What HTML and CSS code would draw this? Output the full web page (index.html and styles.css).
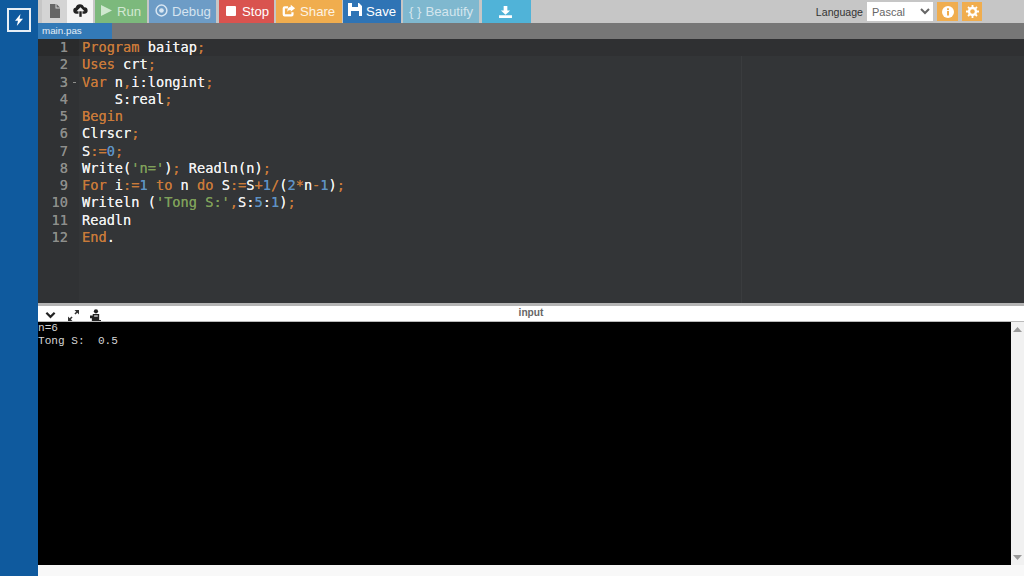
FILE: index.html
```html
<!DOCTYPE html>
<html lang="en">
<head>
<meta charset="utf-8">
<title>Online Pascal Compiler</title>
<link rel="stylesheet" href="styles.css">
</head>
<body>
<aside class="sidebar">
  <div class="logo">
    <svg width="10" height="12" viewBox="0 0 10 12"><path d="M6.500 0 1 6.800h3L2.800 12 9 4.800H5.600z" fill="#fff"/></svg>
  </div>
</aside>
<main class="app">
  <header class="toolbar">
    <div class="actions">
      <button class="btn icon-btn grey-btn"><svg width="10" height="14" viewBox="0 0 10 14"><path d="M0 0h5.500v4.500H10V14H0zM6.500 0 10 3.500H6.500z" fill="#666"/></svg></button>
      <button class="btn icon-btn white-btn"><svg width="15" height="13" viewBox="0 0 19 16"><path d="M4 12a4 4 0 0 1-.5-7.900A5.500 5.500 0 0 1 14 4a4 4 0 0 1 1 8h-3V9h2.500L9.500 4 4.500 9H7v3z" fill="#222"/><rect x="8" y="9" width="3" height="7" fill="#222"/></svg></button>
      <button class="btn run"><svg width="11" height="11" viewBox="0 0 11 11"><path d="M0 0l11 5.500L0 11z" fill="#cfe8cf"/></svg>Run</button>
      <button class="btn debug"><svg width="13" height="13" viewBox="0 0 14 14"><circle cx="7" cy="7" r="5.800" fill="none" stroke="#d8e6f2" stroke-width="1.600"/><circle cx="7" cy="7" r="2.500" fill="#d8e6f2"/></svg>Debug</button>
      <button class="btn stop"><svg width="10" height="10" viewBox="0 0 10 10"><rect width="10" height="10" rx="1" fill="#fff"/></svg>Stop</button>
      <button class="btn share"><svg width="14" height="13" viewBox="0 0 16 15"><path d="M12 9.500V12a1 1 0 0 1-1 1H3a1 1 0 0 1-1-1V5a1 1 0 0 1 1-1h4" fill="none" stroke="#fff" stroke-width="2.600"/><path d="M10 1l5 4-5 4V6.800C7.500 6.800 6.500 7.600 6 9.500 5.800 6 7.500 3.500 10 3.300z" fill="#fff"/></svg>Share</button>
      <button class="btn save"><svg width="14" height="13" viewBox="0 0 14 13"><path d="M0 0h11l3 3v10H0zM4 0v4h6V0zM3 8v5h8V8z" fill="#fff" fill-rule="evenodd"/></svg>Save</button>
      <button class="btn beautify"><span>{ }</span>Beautify</button>
      <button class="btn download"><svg width="13" height="12" viewBox="0 0 14 13"><path d="M5 0h4v5h3L7 9.500 2 5h3zM0 10h14v3H0z" fill="#fff"/></svg></button>
    </div>
    <div class="lang">
      <label class="lang-label" for="lang">Language</label>
      <select class="lang-select" id="lang"><option>Pascal</option></select>
      <button class="mini-btn"><svg width="12" height="12" viewBox="0 0 12 12"><circle cx="6" cy="6" r="6" fill="#fff"/><rect x="5" y="5" width="2" height="4.500" fill="#f0ad4e"/><rect x="5" y="2.300" width="2" height="1.800" fill="#f0ad4e"/></svg></button>
      <button class="mini-btn gear"><svg width="13" height="13" viewBox="0 0 13 13"><circle cx="6.500" cy="6.500" r="3.500" fill="none" stroke="#fff" stroke-width="2.400"/><path d="M6.500 0v13M0 6.500h13M2 2l9 9M11 2l-9 9" stroke="#fff" stroke-width="1.800" stroke-dasharray="2.400 8.200 2.400"/></svg></button>
    </div>
  </header>
  <nav class="tabs"><span class="tab">main.pas</span></nav>
  <section class="editor">
    <div class="gutter">
      <div class="num active-num">1</div><div class="num">2</div>
      <div class="num fold">3</div><div class="num">4</div>
      <div class="num">5</div><div class="num">6</div>
      <div class="num">7</div><div class="num">8</div>
      <div class="num">9</div><div class="num">10</div>
      <div class="num">11</div><div class="num">12</div>
    </div>
    <div class="code">
      <div class="line"><i class="k">Program</i> baitap<i class="k">;</i></div>
      <div class="line"><i class="k">Uses</i> crt<i class="k">;</i></div>
      <div class="line"><i class="k">Var</i> n<i class="k">,</i>i:longint<i class="k">;</i></div>
      <div class="line">    S:real<i class="k">;</i></div>
      <div class="line"><i class="k">Begin</i></div>
      <div class="line">Clrscr<i class="k">;</i></div>
      <div class="line">S<i class="k">:=</i><i class="n">0</i><i class="k">;</i></div>
      <div class="line">Write(<i class="s">'n='</i>)<i class="k">;</i> Readln(n)<i class="k">;</i></div>
      <div class="line"><i class="k">For</i> i<i class="k">:=</i><i class="n">1</i> <i class="k">to</i> n <i class="k">do</i> S<i class="k">:=</i>S<i class="k">+</i><i class="n">1</i><i class="k">/</i>(<i class="n">2</i><i class="k">*</i>n<i class="k">-</i><i class="n">1</i>)<i class="k">;</i></div>
      <div class="line">Writeln (<i class="s">'Tong S:'</i><i class="k">,</i>S:<i class="n">5</i>:<i class="n">1</i>)<i class="k">;</i></div>
      <div class="line">Readln</div>
      <div class="line"><i class="k">End</i>.</div>
    </div>
  </section>
  <div class="splitter"></div>
  <div class="io-bar">
    <div class="io-tools">
      <svg width="11" height="8" viewBox="0 0 12 8"><path d="M1.500 1.500 6 6l4.500-4.500" fill="none" stroke="#222" stroke-width="2.400"/></svg>
      <svg width="11" height="11" viewBox="0 0 11 11"><path d="M6.500 0H11v4.500L9.300 2.800 7.500 4.600 6.400 3.500 8.200 1.700zM4.500 11H0V6.500l1.700 1.700 1.800-1.800 1.100 1.100-1.800 1.800z" fill="#333"/></svg>
      <svg class="tool-last" width="11" height="12" viewBox="0 0 12 13"><circle cx="6.500" cy="2.500" r="2.300" fill="#222"/><path d="M3 5.500h7V12h2v1H2V10H0V7h3z" fill="#222"/><rect x="4.500" y="7" width="4" height="1.200" fill="#fff"/></svg>
    </div>
    <span class="io-title">input</span>
  </div>
  <section class="console">
    <pre class="terminal">n=6
Tong S:  0.5</pre>
    <div class="scrollbar">
      <svg width="9" height="5" viewBox="0 0 9 5"><path d="M4.500 0 9 5H0z" fill="#999"/></svg>
      <svg width="9" height="5" viewBox="0 0 9 5"><path d="M0 0h9L4.500 5z" fill="#999"/></svg>
    </div>
  </section>
  <div class="footer"></div>
</main>
</body>
</html>
```
FILE: styles.css
```css
* { box-sizing: border-box; }
html, body { margin: 0; height: 100%; }
body {
  display: flex;
  width: 1024px;
  height: 576px;
  overflow: hidden;
  font-family: "Liberation Sans", Arial, sans-serif;
  background: #fff;
}
.sidebar {
  width: 38px;
  flex: none;
  background: #0f5a9e;
  padding: 8px 0 0 7px;
}
.logo {
  width: 24px;
  height: 24px;
  border: 2px solid #e6eef6;
  display: flex;
  align-items: center;
  justify-content: center;
}
.app {
  flex: 1;
  min-width: 0;
  display: flex;
  flex-direction: column;
}
.toolbar {
  height: 23px;
  flex: none;
  background: #c6c6c6;
  display: flex;
  justify-content: space-between;
  padding-left: 4px;
}
.actions { display: flex; gap: 2px; }
.btn {
  height: 23px;
  border: 0;
  margin: 0;
  padding: 0 0 0 6px;
  display: flex;
  align-items: center;
  justify-content: flex-start;
  gap: 4px;
  font: 13.2px "Liberation Sans", Arial, sans-serif;
  color: #fff;
}
.btn svg { margin-bottom: 2px; }
.icon-btn { justify-content: center; padding: 0; }
.grey-btn { width: 25px; background: #d4d4d4; margin-right: -2px; }
.white-btn { width: 26px; background: #f4f4f4; }
.run { width: 52px; background: #7cb97c; color: #d2e8d2; gap: 5px; }
.debug { width: 67px; background: #6d9cc6; color: #d6e4f0; }
.stop { width: 55px; background: #d9534f; gap: 6px; padding-left: 7px; margin-left: 1px; }
.share { width: 66px; background: #f0ad4e; color: #fdf3e3; gap: 4px; }
.save { width: 58px; background: #2f74b5; padding-left: 5px; margin-left: -1px; }
.save svg { margin-bottom: 5px; }
.beautify { width: 76px; background: #7fb8cf; color: #d4e6ee; }
.download { width: 49px; background: #50b3d8; padding-left: 17px; margin-left: 1px; }
.download svg { margin-bottom: 0; }
.lang {
  display: flex;
  align-items: center;
  gap: 4px;
  padding-right: 42px;
}
.lang-label { font-size: 10.600px; color: #333; }
.lang-select {
  width: 66px;
  height: 19px;
  border: 0;
  background: #fff;
  font: 11px "Liberation Sans", Arial, sans-serif;
  color: #666;
  padding: 0 0 0 1px;
}
.mini-btn {
  width: 21px;
  height: 19px;
  border: 0;
  padding: 0;
  background: #f0ad4e;
  display: flex;
  align-items: center;
  justify-content: center;
}
.gear { width: 20px; }
.tabs {
  height: 16px;
  flex: none;
  background: #777;
  display: flex;
}
.tab {
  width: 74px;
  background: #337ab7;
  color: #e4eef6;
  font-size: 9.800px;
  line-height: 16px;
  padding-left: 4px;
}
.editor {
  height: 264px;
  flex: none;
  display: flex;
  background: linear-gradient(to right, #333537 703px, #3a3c3e 703px, #3a3c3e 704px, #333537 704px);
  font: 13.650px/17.250px "DejaVu Sans Mono", monospace;
  text-shadow: 0 0 .6px currentColor;
}
.gutter {
  width: 41px;
  flex: none;
  background: #303234;
  color: #8e8f8c;
}
.num {
  height: 17.250px;
  text-align: right;
  padding-right: 11px;
  position: relative;
}
.active-num { background: #2a2b2c; }
.fold::after {
  content: "";
  position: absolute;
  right: 3px;
  top: 8px;
  width: 3px;
  height: 1px;
  background: #8e8f8c;
}
.code { padding-left: 3px; color: #f0f0f0; flex: 1; }
.line { height: 17.250px; white-space: pre; }
.line:first-child { background: #2f3032; margin-left: -3px; padding-left: 3px; }
.k { font-style: normal; color: #c97a3a; }
.n { font-style: normal; color: #5f93c4; }
.s { font-style: normal; color: #7fa05a; }
.splitter { height: 3px; flex: none; background: #b4b4b4; }
.io-bar {
  height: 16px;
  flex: none;
  position: relative;
  background: #fff;
  display: flex;
  align-items: center;
  justify-content: center;
  border-bottom: 1px solid #bbb;
}
.io-tools {
  position: absolute;
  left: 7px;
  top: 3px;
  display: flex;
  align-items: center;
  gap: 12px;
}
.tool-last { margin-left: -1px; }
.io-title { font-size: 10.200px; font-weight: bold; color: #666; margin-top: -2px; }
.console {
  height: 243px;
  flex: none;
  display: flex;
}
.terminal {
  flex: 1;
  margin: 0;
  background: #000;
  color: #d4d4d4;
  font: 11.100px/13px "Liberation Mono", monospace;
}
.scrollbar {
  width: 13px;
  flex: none;
  background: #f1f1f1;
  display: flex;
  flex-direction: column;
  justify-content: space-between;
  align-items: center;
  padding: 5px 0;
}
.footer { flex: 1; background: #f8f8f8; }
```
